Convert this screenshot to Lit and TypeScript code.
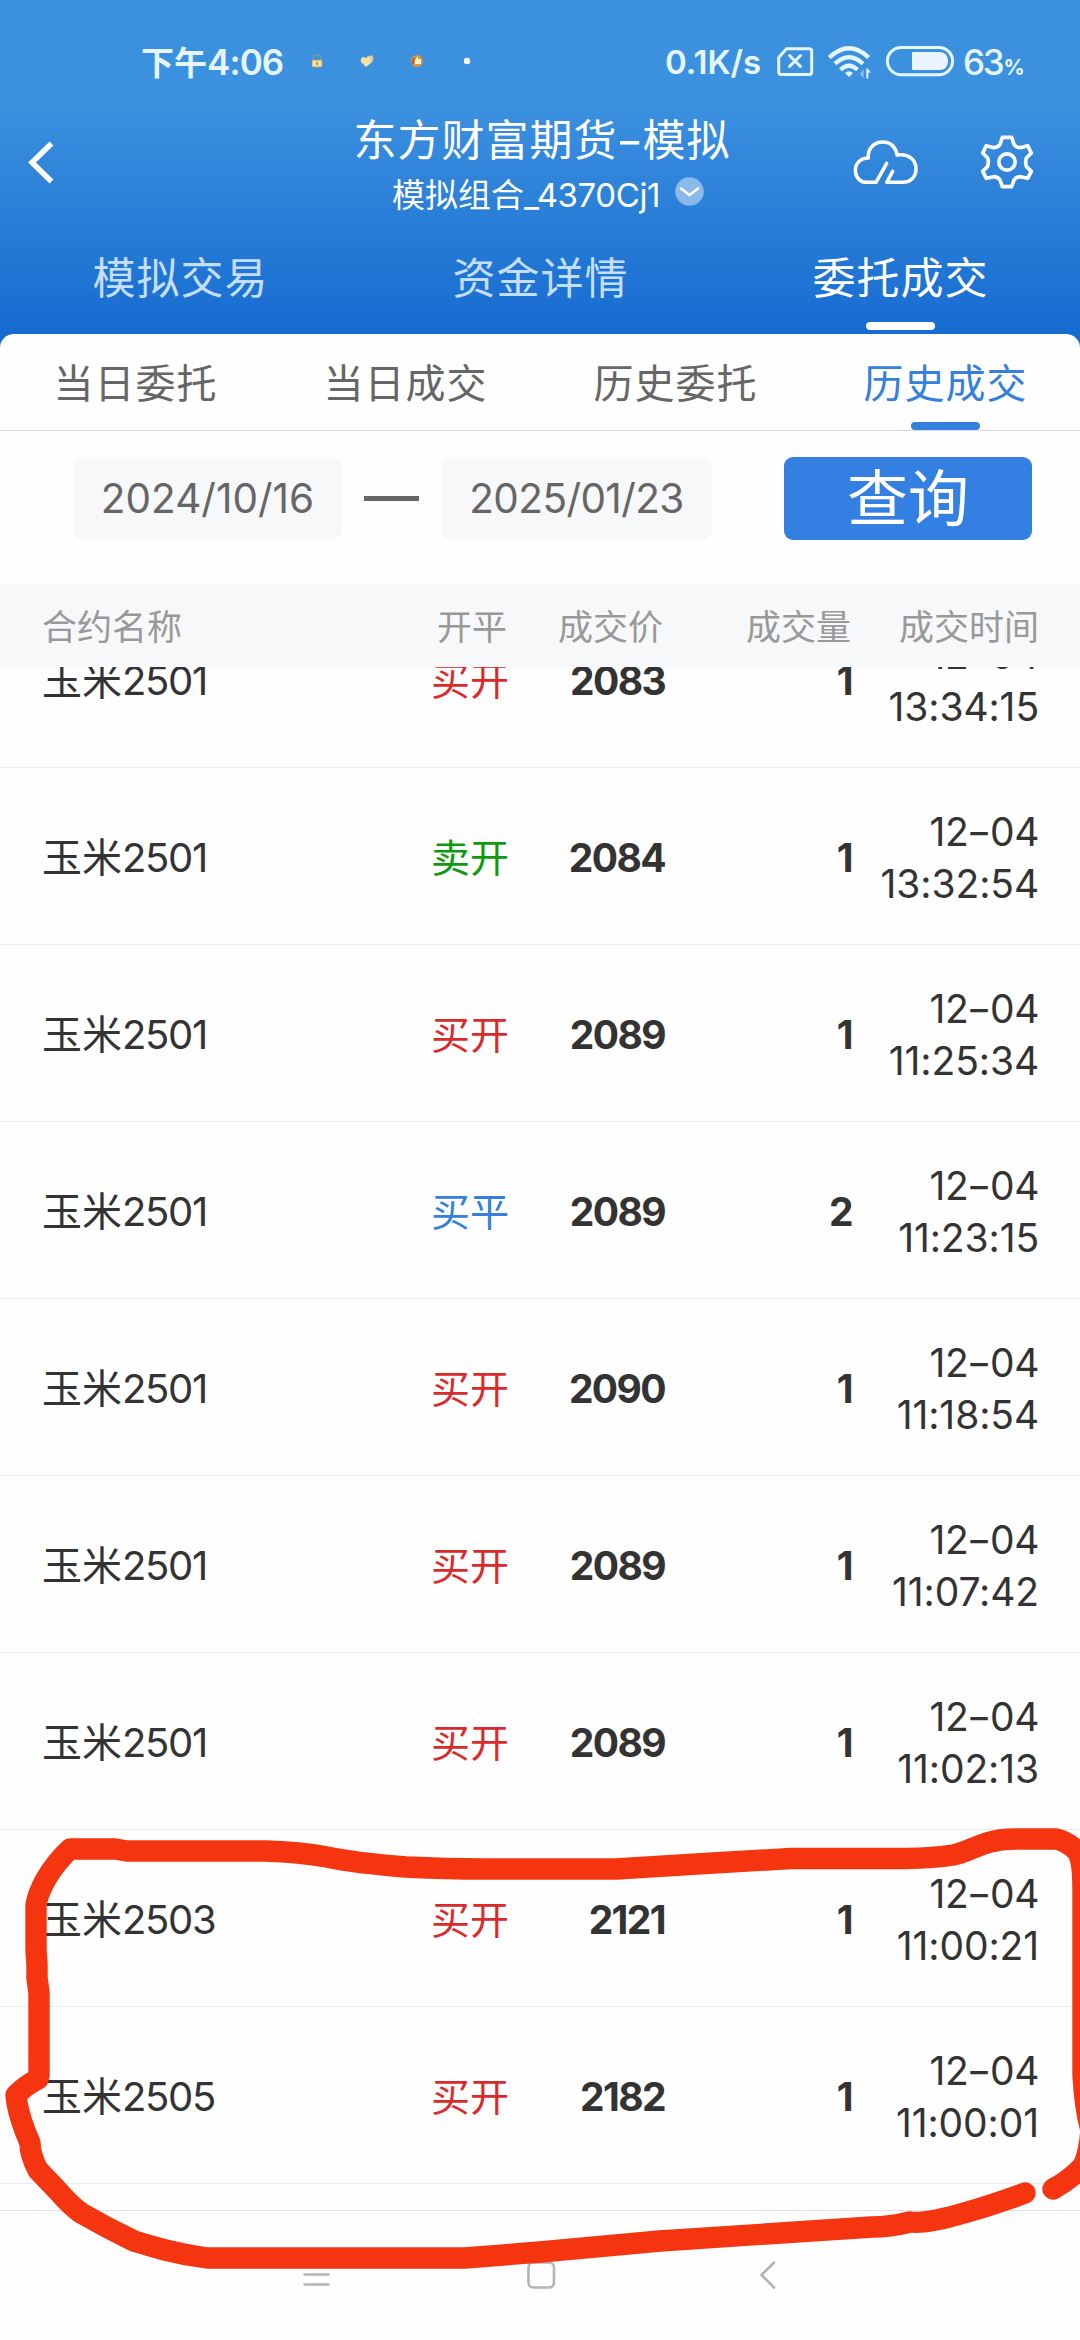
import { LitElement, html, css, svg } from "lit";
import { customElement, property } from "lit/decorators.js";
import { classMap } from "lit/directives/class-map.js";

interface Trade {
  name: string;
  side: string;
  tone: "buy" | "sell" | "close";
  price: string;
  volume: string;
  date: string;
  time: string;
}

const trade = (
  name: string,
  side: string,
  tone: Trade["tone"],
  price: string,
  volume: string,
  time: string,
): Trade => ({ name, side, tone, price, volume, date: "12-04", time });

const TRADES: Trade[] = [
  trade("玉米2501", "买开", "buy", "2083", "1", "13:34:15"),
  trade("玉米2501", "卖开", "sell", "2084", "1", "13:32:54"),
  trade("玉米2501", "买开", "buy", "2089", "1", "11:25:34"),
  trade("玉米2501", "买平", "close", "2089", "2", "11:23:15"),
  trade("玉米2501", "买开", "buy", "2090", "1", "11:18:54"),
  trade("玉米2501", "买开", "buy", "2089", "1", "11:07:42"),
  trade("玉米2501", "买开", "buy", "2089", "1", "11:02:13"),
  trade("玉米2503", "买开", "buy", "2121", "1", "11:00:21"),
  trade("玉米2505", "买开", "buy", "2182", "1", "11:00:01"),
];

/** Text whose hyphens are drawn wider than the font's own. */
const wideHyphen = (text: string) => {
  const [head, tail] = text.split("-");
  return html`${head}<span class="hyphen">-</span>${tail}`;
};

const hyphenStyles = css`
  .hyphen { display: inline-block; transform: scaleX(1.4); margin: 0 2px; }
`;

@customElement("status-bar")
class StatusBar extends LitElement {
  static styles = css`
    :host { display: flex; height: 64px; margin-top: 30px; padding: 0 60px 0 141px; align-items: center; color: #e6f6ff; font-weight: 500; }
    .clock { font-size: 33px; line-height: 64px; font-weight: 600; width: 170px; white-space: nowrap; }
    .clock .num { font-size: 35px; letter-spacing: -0.9px; }
    .notes { display: block; width: 180px; height: 46px; margin-left: -11px; }
    .right { display: flex; align-items: center; margin-left: auto; }
    .speed { font-size: 33px; width: 111px; white-space: nowrap; letter-spacing: 0; font-weight: 600; }
    .icons { display: block; width: 182px; height: 34px; }
    .pct { font-size: 35px; letter-spacing: -2.2px; margin-left: 5px; width: 57px; white-space: nowrap; }
    .pct .sign { font-size: 21px; font-weight: 700; letter-spacing: 0; margin-left: 1px; }
  `;

  render() {
    return html`
      <span class="clock">下午<span class="num">4:06</span></span>
      <svg class="notes" viewBox="300 40 180 46">
        <path d="M313 61v-3q0-2 4-2t4 2v3" fill="none" stroke="#8f9f86" stroke-width="1"/>
        <rect x="312" y="61" width="10" height="7" rx="1.2" fill="#f3dfa0" stroke="#b39a5e" stroke-width="0.8"/>
        <path d="M317 63v3" stroke="#a98247" stroke-width="1.6"/>
        <path d="M366 60q1-4 4-3 3-2 3.500 2 0 4-4 6z" fill="#d9c593"/>
        <path d="M366 68l-5-5q-1-5 3-5l2 1.200q2-2 4.500-.5 2 3-.5 6z" fill="#f8dfa4"/>
        <circle cx="417" cy="62" r="6" fill="#e5913a"/>
        <path d="M413 65q-1-5 2-6" fill="none" stroke="#b9571e" stroke-width="1.800"/>
        <path d="M415 61l3-4v3h3v5h-6z" fill="#fff4d0"/>
        <circle cx="467" cy="62" r="3.200" fill="#fff"/>
      </svg>
      <div class="right">
        <span class="speed">0.1K/s</span>
        <svg class="icons" viewBox="776 46 182 34" fill="none">
          <path d="M786.500 49.700H809q2.700 0 2.700 2.700v20.400q0 2.700-2.700 2.700h-27.600q-2.700 0-2.700-2.700V58.500z" stroke="#e6f6ff" stroke-width="3" stroke-linejoin="round"/>
          <path d="M789.500 56.500l11 11m0-11l-11 11" stroke="#e6f6ff" stroke-width="3" stroke-linecap="round"/>
          <g stroke="#e6f6ff" stroke-width="4.200">
            <path d="M829.300 58.500q19.700-18.500 39.400 0"/>
            <path d="M835 64.800q14-13 28 0"/>
            <path d="M840.500 70.800q8.500-8 17 0"/>
          </g>
          <path d="M845 74q4-3.500 8 0l-4 4z" fill="#e6f6ff"/>
          <path d="M863.500 70v9l-3.500-4z" fill="#8fc2ee"/>
          <path d="M866.300 79.500V69.500h1.500l3 4h-2.500v6z" fill="#e6f6ff"/>
          <rect x="887.400" y="48.400" width="65.200" height="27.400" rx="13.700" stroke="#e6f6ff" stroke-width="3"/>
          <path d="M913 53h26q9 0 9 9t-9 9h-26q-1 0-1-1V54q0-1 1-1z" fill="#eaf4ff"/>
        </svg>
        <span class="pct">63<span class="sign">%</span></span>
      </div>
    `;
  }
}

@customElement("trade-row")
class TradeRow extends LitElement {
  @property({ attribute: false }) trade!: Trade;

  static styles = [
    hyphenStyles,
    css`
    :host {
      display: grid; box-sizing: border-box; height: 177px; flex: none;
      grid-template-columns: 303px 163px 155px 187px 188px;
      padding: 3px 41px 0 43px; align-items: center; border-bottom: 1px solid #ebebeb;
      color: #333; font-size: 39px; line-height: 52px; text-align: right; white-space: nowrap;
    }
    .name { text-align: left; font-size: 40px; margin-left: -1px; }
    .name .code { letter-spacing: -1.3px; }
    .side { font-size: 39px; }
    .buy { color: #d92b2b; }
    .sell { color: #0d9b0d; }
    .close { color: #3580dc; }
    .num { font-weight: 700; letter-spacing: -1.6px; margin-right: -1px; }
    .when { letter-spacing: -0.1px; }
    .date { letter-spacing: -0.4px; }
  `,
  ];

  render() {
    const t = this.trade;
    return html`
      <span class="name">${t.name.slice(0, 2)}<span class="code">${t.name.slice(2)}</span></span>
      <span class=${classMap({ side: true, [t.tone]: true })}>${t.side}</span>
      <span class="num">${t.price}</span>
      <span class="num">${t.volume}</span>
      <div class="when"><div class="date">${wideHyphen(t.date)}</div><div>${t.time}</div></div>
    `;
  }
}

@customElement("app-root")
class AppRoot extends LitElement {
  static styles = [
    hyphenStyles,
    css`
    :host {
      display: flex; flex-direction: column; position: relative; width: 1080px; height: 2340px;
      overflow: hidden; background: #fefefe; white-space: nowrap;
      font-family: Inter, "Noto Sans CJK SC", sans-serif;
    }
    .top { box-sizing: border-box; height: 350px; flex: none; display: flex; flex-direction: column;
      background: linear-gradient(#3c91df 0, #3c91df 100px, #166bd0 334px); color: #fff; }
    .bar { display: grid; grid-template-columns: 240px 1fr 240px; height: 135px; align-items: start; }
    .back { width: 30px; height: 50px; margin: 43px 0 0 25px; }
    .heading { display: flex; flex-direction: column; align-items: center; }
    .title { font-size: 43px; letter-spacing: 1px; line-height: 60px; margin: 16px 0 0 4px; }
    .account { display: flex; align-items: center; gap: 15px; margin-left: 16px; font-size: 33px; line-height: 50px; }
    .account .id { letter-spacing: -0.4px; }
    .badge { width: 29px; height: 29px; margin-top: -8px; }
    .tools { display: flex; justify-content: flex-end; align-items: center; gap: 61px; padding: 41px 46px 0 0; }
    .cloud { width: 66px; height: 46px; }
    .gear { width: 54px; height: 54px; }
    .tabs { display: grid; grid-template-columns: repeat(3, 1fr); height: 105px; }
    .tab { display: flex; flex-direction: column; align-items: center; justify-content: space-between;
      font-size: 43px; letter-spacing: 1px; line-height: 60px; padding: 19px 0 4px; box-sizing: border-box; color: #c4dffb; }
    .tab.on { color: #fff; }
    .tab span, .sub span { margin-right: -1px; }
    .tab.on::after, .sub.on::after { content: ""; width: 69px; height: 8px; border-radius: 4px; background: currentColor; }
    .panel { display: flex; flex-direction: column; flex: none; margin-top: -16px; background: #fefefe; border-radius: 14px 14px 0 0; }
    .subs { display: grid; grid-template-columns: repeat(4, 1fr); height: 96px; border-bottom: 1px solid #dcdcdc; }
    .sub { display: flex; flex-direction: column; align-items: center; justify-content: space-between; color: #666;
      font-size: 40px; letter-spacing: 1px; line-height: 60px; padding-top: 20px; }
    .sub.on { color: #3580dc; }
    .filter { display: flex; align-items: center; padding: 26px 48px 44px 73px; height: 83px; }
    .date { box-sizing: border-box; width: 269px; height: 83px; border-radius: 10px; background: #f7f8fa; color: #666;
      font-size: 40.5px; line-height: 84px; text-align: center; letter-spacing: 0; }
    .date.end { width: 271px; letter-spacing: -0.6px; }
    .dash { width: 55px; height: 5px; margin: 0 22px; background: #666; }
    .query { margin-left: auto; width: 248px; height: 83px; border-radius: 9px; background: #3380e2; color: #fff;
      font: inherit; font-size: 61px; line-height: 85px; padding: 0; border: 0; letter-spacing: 0; }
    .head { display: grid; grid-template-columns: 302px 163px 156px 188px 188px; height: 83px; padding: 3px 41px 0 42px;
      box-sizing: border-box; background: #f7f8fa; color: #999; font-size: 35px; line-height: 80px; text-align: right; }
    .head .first { text-align: left; }
    .list { height: 1543px; flex: none; overflow: hidden; display: flex; flex-direction: column; }
    .rows { display: flex; flex-direction: column; flex: none; margin-top: -76px; }
    .nav { flex: 1; border-top: 1px solid #e2e2e2; }
    .nav svg { display: block; width: 1080px; height: 129px; }
    .mark { position: absolute; left: 0; top: 0; width: 1080px; height: 2340px; pointer-events: none; }
  `,
  ];

  private tab(label: string, cls: string, on = false) {
    return html`<div class=${classMap({ [cls]: true, on })}><span>${label}</span></div>`;
  }

  private marker() {
    return svg`<path fill="none" stroke="#f5350f" stroke-width="21.400" stroke-linecap="round" stroke-linejoin="round"
      d="M1025 2193Q990 2206 957 2215T910 2222Q890 2227 872 2227L781 2233L660 2241L540 2252L465 2258H207Q185 2255 165 2250
      Q150 2246 134 2241Q107 2228 81 2213Q70 2205 58 2191L38 2170Q30 2155 30 2143Q20 2120 17 2103L16 2095Q26 2085 38 2079L39 2075V1993
      L37 1978V1965L36 1950V1905Q38 1893 46 1879Q56 1862 70 1849H115L127 1851H265Q300 1852 327 1857Q355 1863 406 1867
      Q450 1869 482 1869H616L705 1863.500L791 1858.500H905Q935 1858 953 1855C972 1851 984 1839 1014 1839H1056Q1066 1841 1076 1850Q1083 1858 1083 1890
      V2075Q1085 2110 1091 2130Q1088 2164 1079 2170Q1068 2181 1053 2189"/>`;
  }

  render() {
    return html`
      <div class="top">
        <status-bar></status-bar>
        <div class="bar">
          <svg class="back" viewBox="25 137 30 50"><path d="M51.500 143.500L32 162.500L51.500 181.500" fill="none" stroke="#fff" stroke-width="5.400"/></svg>
          <div class="heading">
            <div class="title">${wideHyphen("东方财富期货-模拟")}</div>
            <div class="account">
              <span>模拟组合<span class="id">_4370Cj1</span></span>
              <svg class="badge" viewBox="0 0 29 29"><circle cx="14.500" cy="14.500" r="14.300" fill="#8ab9ec"/><path d="M6 11.500l8.500 6.500L23 11.500" fill="none" stroke="#fff" stroke-width="2.600" stroke-linecap="round"/></svg>
            </div>
          </div>
          <div class="tools">
            <svg class="cloud" viewBox="37 51 198 138" fill="none" stroke="#fff" stroke-width="10.500" stroke-linecap="round" stroke-linejoin="round">
              <path d="M138 124L106 181H78C58 181 44 166 44 145C44 124 60 108 83 108C80 80 100 60 127 60C150 60 166 76 169 99C200 94 226 110 226 140C226 164 210 181 187 181H138L156 148"/>
            </svg>
            <svg class="gear" viewBox="417 44 162 162" fill="none" stroke="#fff" stroke-width="11" stroke-linejoin="round">
              <path d="M484 51H512L519 72Q526 82 538 82L560 76L571 98L556 113Q552 125 556 138L571 153L560 174L538 169Q526 169 519 179L512 199H484L477 179Q470 169 458 169L436 174L425 153L440 138Q444 125 440 113L425 98L436 76L458 82Q470 82 477 72Z"/>
              <circle cx="498" cy="125" r="24.500"/>
            </svg>
          </div>
        </div>
        <div class="tabs">
          ${this.tab("模拟交易", "tab")}${this.tab("资金详情", "tab")}${this.tab("委托成交", "tab", true)}
        </div>
      </div>
      <div class="panel">
        <div class="subs">
          ${this.tab("当日委托", "sub")}${this.tab("当日成交", "sub")}${this.tab("历史委托", "sub")}${this.tab("历史成交", "sub", true)}
        </div>
        <div class="filter">
          <div class="date">2024/10/16</div>
          <div class="dash"></div>
          <div class="date end">2025/01/23</div>
          <button class="query">查询</button>
        </div>
        <div class="head">
          <span class="first">合约名称</span><span>开平</span><span>成交价</span><span>成交量</span><span>成交时间</span>
        </div>
      </div>
      <div class="list">
        <div class="rows">${TRADES.map((t) => html`<trade-row .trade=${t}></trade-row>`)}</div>
      </div>
      <div class="nav">
        <svg viewBox="0 2211 1080 129" fill="none" stroke="#b4b4b4" stroke-width="2.600" stroke-linecap="round" stroke-linejoin="round">
          <path d="M304.500 2274.500h24M304.500 2284.500h24"/>
          <rect x="528.500" y="2262.500" width="25.500" height="25" rx="5"/>
          <path d="M774 2262.500L761.500 2275L774 2287.500"/>
        </svg>
      </div>
      <svg class="mark" viewBox="0 0 1080 2340">${this.marker()}</svg>
    `;
  }
}
